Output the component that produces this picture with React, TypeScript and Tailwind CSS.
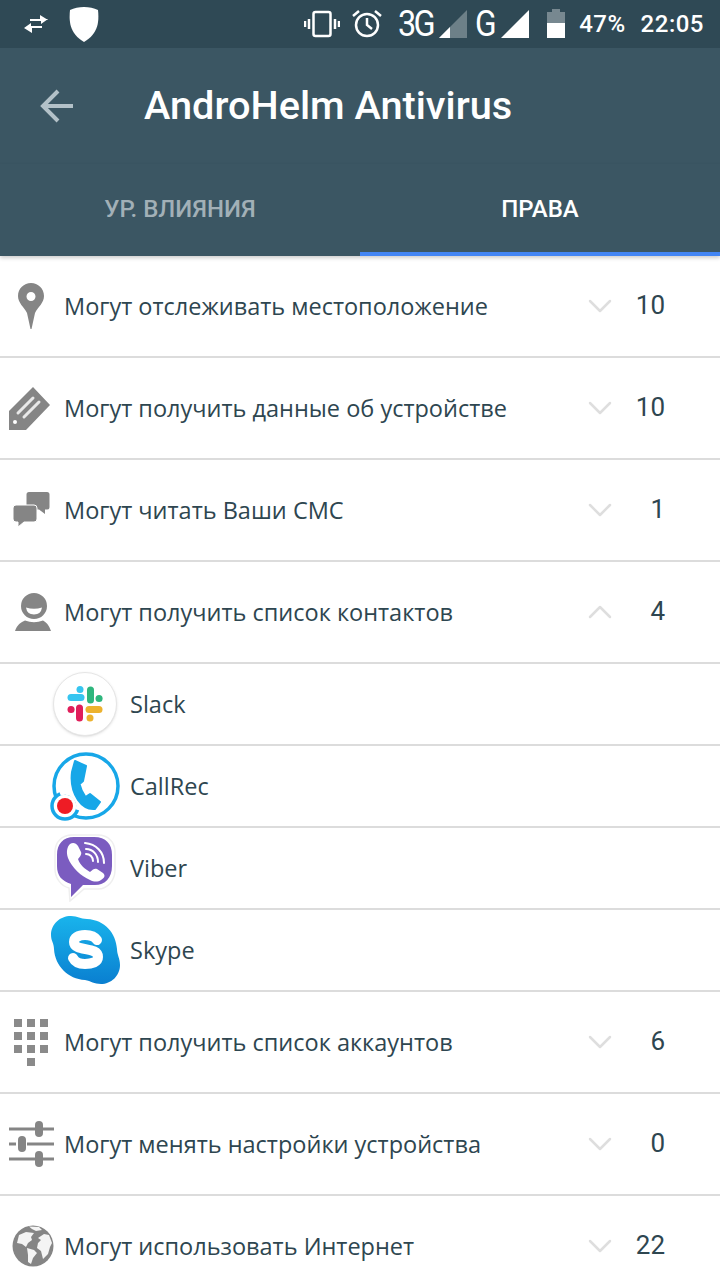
import React from 'react';
import { ChevronDown, ChevronUp } from 'lucide-react';

const PinIcon = () => (
  <svg width="26" height="46" viewBox="0 0 26 46">
    <path fillRule="evenodd" fill="#858585" d="M13 0C6 0 0 5.500 0 13C0 20 6 24 9 30L12.500 46H13.500L17 30C20 24 26 20 26 13C26 5.500 20 0 13 0ZM13 9A4.500 4.500 0 1 1 13 18A4.500 4.500 0 0 1 13 9Z" />
  </svg>
);

const TagIcon = () => (
  <svg width="42" height="43" viewBox="0 0 42 43">
    <path fillRule="evenodd" fill="#858585" d="M24 0L41 18L17 43H0V24ZM6 33A2 2 0 1 0 6 37A2 2 0 0 0 6 33Z" />
    <path d="M9 26L24 11M15 30L30 15" stroke="#e8e8e8" strokeWidth="3" strokeLinecap="round" />
  </svg>
);

const ChatIcon = () => (
  <svg width="37" height="36" viewBox="0 0 37 36">
    <path fill="#858585" d="M16 0H34Q36.500 0 36.500 2.500V15Q36.500 17.500 34 17.500H32L32 22L26 17.500H16Q13.500 17.500 13.500 15V2.500Q13.500 0 16 0Z" />
    <path fill="#858585" stroke="#fff" strokeWidth="1" d="M3 13H21Q24 13 24 16V27Q24 30 21 30H11L5 35V30H3Q0 30 0 27V16Q0 13 3 13Z" />
  </svg>
);

const UserIcon = () => (
  <svg width="36" height="38" viewBox="0 0 36 38">
    <path fillRule="evenodd" fill="#858585" d="M19 0A13 13 0 1 1 19 26A13 13 0 1 1 19 0ZM11 14.500Q19 17 27 14.500Q26 21.500 19 21.500Q12 21.500 11 14.500Z" />
    <path fill="#858585" d="M0 38C2 32 6 29 10 27.500Q19 31 28 27.500C31 29 34 32 36 38Z" />
  </svg>
);

const KeypadIcon = () => (
  <div className="grid grid-cols-3 gap-[5px]">
    {[0, 1, 2, 3, 4, 5, 6, 7, 8].map((i) => (
      <div key={i} className="w-[8px] h-[8px] bg-[#8a8a8a]" />
    ))}
    <div className="col-start-2 w-[8px] h-[8px] bg-[#8a8a8a]" />
  </div>
);

const SlidersIcon = () => (
  <svg width="46" height="46" viewBox="0 0 46 46">
    <g stroke="#858585" strokeWidth="3">
      <path d="M0 8H26M34 8H45M0 23H7M18 23H45M0 38H26M34 38H45" />
    </g>
    <rect x="26" y="0" width="8" height="16" rx="4" fill="#858585" />
    <rect x="9" y="15" width="8" height="16" rx="4" fill="#858585" />
    <rect x="26" y="30" width="8" height="16" rx="4" fill="#858585" />
  </svg>
);

const GlobeIcon = () => (
  <svg width="42" height="42" viewBox="0 0 42 42">
    <circle cx="21" cy="21" r="20.500" fill="#858585" />
    <path fill="#f4f4f4" d="M7 10L14 7L22 8L19 12L20 15L16 18L14 22L10 19L5 18ZM17 1.500L27 2L30 5L24 6L20 4ZM15 23L22 25L25 28L21 33L19 39L16 37L16 30ZM26 13L32 9L37 10L40 18L38 22L36 29L31 34L29 26L25 23L26 18L29 15Z" />
  </svg>
);

const SlackIcon = () => (
  <div className="w-[64px] h-[64px] rounded-full bg-white border border-[#e6e6e6] shadow-sm flex items-center justify-center">
    <svg width="36" height="36" viewBox="0 0 36 36">
      <g strokeWidth="7" strokeLinecap="round" fill="none">
        <path d="M4 11.500H14" stroke="#36c5f0" />
        <path d="M13 3.500V3.600" stroke="#36c5f0" />
        <path d="M23.500 4V14" stroke="#2eb67d" />
        <path d="M32 12.500H32.100" stroke="#2eb67d" />
        <path d="M22 23.500H32" stroke="#ecb22e" />
        <path d="M23 32V32.100" stroke="#ecb22e" />
        <path d="M12.500 22V32" stroke="#e01e5a" />
        <path d="M4 23.500H4.100" stroke="#e01e5a" />
      </g>
    </svg>
  </div>
);

const CallRecIcon = () => (
  <svg width="72" height="72" viewBox="0 0 72 72">
    <circle cx="37" cy="36" r="32" fill="#fff" stroke="#17a7e8" strokeWidth="3.500" />
    <circle cx="16" cy="56" r="13" fill="#fff" stroke="#17a7e8" strokeWidth="3.500" />
    <path d="M11 43.500A13.500 13.500 0 0 1 29 60" fill="none" stroke="#fff" strokeWidth="5" />
    <path fill="#17a7e8" stroke="#17a7e8" strokeWidth="2" strokeLinejoin="round" d="M26 11L37 16L34 31Q32 33 30.500 34Q32 41 36.500 47L41 44L51 52L46 59Q36 60 29 50Q21 38 23 22Z" />
    <circle cx="16" cy="56" r="8" fill="#ee1c25" />
  </svg>
);

const ViberIcon = () => (
  <svg width="62" height="68" viewBox="0 0 62 68">
    <path fill="#fff" stroke="#efefef" strokeWidth="1.500" d="M18 1H44C54 1 61 8 61 18V36C61 46 54 55 44 55H30L16 67L15 54C7 52 1 44 1 35V18C1 8 8 1 18 1Z" />
    <path fill="#7b5cc0" d="M20 3H40C52 3 58 10 58 21V32C58 44 51 51 41 51H29L17 63L17 50C8 47 3 42 3 32V21C3 10 9 3 20 3Z" />
    <path fill="#fff" d="M16 10C19 8 22 9 24 12L27 18C28 20 26 23 24 25C26 31 31 35 36 38C39 35 41 34 43 35L49 39C52 42 50 44 47 46C44 48 40 48 36 46C27 42 18 34 14 24C12 18 13 13 16 10Z" />
    <g fill="none" stroke="#fff" strokeWidth="2" strokeLinecap="round">
      <path d="M31 9C42 10 50 18 50 29" />
      <path d="M32 15C39 15 44 21 44 28" />
      <path d="M32 20C36 20 39 23 39 27" />
    </g>
  </svg>
);

const SkypeIcon = () => (
  <svg width="70" height="70" viewBox="0 0 70 70">
    <defs>
      <linearGradient id="skype" x1="0" y1="0" x2="0" y2="1">
        <stop offset="0" stopColor="#19b4ec" />
        <stop offset="1" stopColor="#0a7fd0" />
      </linearGradient>
    </defs>
    <path fill="url(#skype)" d="M20 1C27 1 29 4 36 4C54 5 65 18 66 34C66 40 69 43 69 50C69 61 60 69 50 69C43 69 40 66 34 65C17 64 4 51 3 34C3 28 0 26 0 20C0 9 9 1 20 1Z" />
    <path fill="none" stroke="#fff" strokeWidth="10" strokeLinecap="round" d="M46 25C44 22 40 20 34 20C27 20 23 23 23 27C23 37 47 31 47 42C47 47 41 49 34 49C28 49 24 47 22 43" />
  </svg>
);

type Item = { icon: React.ReactNode; iconClass: string; label: string; count: number; open?: boolean };
type InstalledApp = { icon: React.ReactNode; iconClass: string; name: string };

const before: Item[] = [
  { icon: <PinIcon />, iconClass: 'pl-[18px]', label: 'Могут отслеживать местоположение', count: 10 },
  { icon: <TagIcon />, iconClass: 'pl-[9px]', label: 'Могут получить данные об устройстве', count: 10 },
  { icon: <ChatIcon />, iconClass: 'pl-[13px]', label: 'Могут читать Ваши СМС', count: 1 },
  { icon: <UserIcon />, iconClass: 'pl-[15px]', label: 'Могут получить список контактов', count: 4, open: true },
];

const after: Item[] = [
  { icon: <KeypadIcon />, iconClass: 'pl-[14px]', label: 'Могут получить список аккаунтов', count: 6 },
  { icon: <SlidersIcon />, iconClass: 'pl-[9px]', label: 'Могут менять настройки устройства', count: 0 },
  { icon: <GlobeIcon />, iconClass: 'pl-[12px]', label: 'Могут использовать Интернет', count: 22 },
];

const apps: InstalledApp[] = [
  { icon: <SlackIcon />, iconClass: 'pl-[53px]', name: 'Slack' },
  { icon: <CallRecIcon />, iconClass: 'pl-[49px]', name: 'CallRec' },
  { icon: <ViberIcon />, iconClass: 'pl-[54px]', name: 'Viber' },
  { icon: <SkypeIcon />, iconClass: 'pl-[51px]', name: 'Skype' },
];

const Row = ({ item }: { item: Item }) => (
  <div className="h-[102px] shrink-0 border-b-2 border-[#dcdcdc] flex items-center text-[#2e4650]">
    <div className={`${item.iconClass} w-[64px] shrink-0 flex overflow-visible`}>{item.icon}</div>
    <span className="flex-1 pt-[2px] text-[23.500px] leading-none font-['Open_Sans',sans-serif]">{item.label}</span>
    <div className="flex items-center">
      {item.open ? (
        <ChevronUp size={40} strokeWidth={1.500} className="text-[#dedede]" />
      ) : (
        <ChevronDown size={40} strokeWidth={1.500} className="text-[#dedede]" />
      )}
      <span className="w-[45px] text-right text-[26px] leading-none -translate-y-[1px]">{item.count}</span>
      <div className="w-[55px]" />
    </div>
  </div>
);

const AppRow = ({ app }: { app: InstalledApp }) => (
  <div className="h-[82px] shrink-0 border-b-2 border-[#dcdcdc] flex items-center text-[#2e4650]">
    <div className={`${app.iconClass} w-[130px] shrink-0 flex`}>{app.icon}</div>
    <span className="pt-[2px] text-[23.500px] leading-none font-['Open_Sans',sans-serif]">{app.name}</span>
  </div>
);

export default function AppScreen() {
  return (
    <div className="w-[720px] h-[1280px] overflow-hidden bg-white flex flex-col font-['Roboto',sans-serif]">
      {/* status bar */}
      <div className="h-[48px] shrink-0 bg-[#2f4955] flex items-center text-white">
        <svg className="ml-[23px]" width="26" height="20" viewBox="0 0 26 20" fill="#fff">
          <path d="M1 15H19V13H8V10ZM25 6H7V8H18V11Z" transform="translate(0 -1)" />
          <path d="M17 1L25 6H17ZM9 19L1 14H9Z" />
        </svg>
        <svg className="ml-[20px]" width="30" height="35" viewBox="0 0 30 35" fill="#fff">
          <path d="M15 0C20 0 25 1 29 3C30 14 30 26 15 35C0 26 0 14 1 3C5 1 10 0 15 0Z" />
        </svg>
        <div className="ml-auto flex items-center">
          <svg width="36" height="28" viewBox="0 0 36 28" fill="none" stroke="#fff">
            <rect x="9.500" y="2" width="17" height="24" rx="2" strokeWidth="2.500" />
            <path d="M5 9V19M1 11V17M31 9V19M35 11V17" strokeWidth="2.500" />
          </svg>
          <svg className="ml-[11px]" width="32" height="32" viewBox="0 0 32 32" fill="none" stroke="#fff" strokeWidth="2.500">
            <circle cx="16" cy="17" r="11" />
            <path d="M16 10V17L21 21M2 8L8 3M30 8L24 3" />
          </svg>
          <span className="ml-[15px] w-[37px] text-[36px] leading-none tracking-[-3px] scale-x-[0.9] origin-left">3G</span>
          <svg className="ml-[4px]" width="28" height="28" viewBox="0 0 28 28">
            <path d="M28 0V28H0Z" fill="#fff" fillOpacity="0.3" />
            <path d="M11 17V28H0Z" fill="#fff" />
          </svg>
          <span className="ml-[8px] w-[22px] text-[36px] leading-none scale-x-[0.88] origin-left">G</span>
          <svg className="ml-[4px]" width="28" height="28" viewBox="0 0 28 28" fill="#fff">
            <path d="M28 0V28H0Z" />
          </svg>
          <svg className="ml-[17px]" width="20" height="30" viewBox="0 0 20 30">
            <path d="M6 0H14V3H19V14H1V3H6Z" fill="#fff" fillOpacity="0.35" />
            <path d="M1 14H19V29H1Z" fill="#fff" />
          </svg>
          <span className="ml-[13px] text-[24px] leading-none font-medium tracking-[0.5px]">47%</span>
          <span className="ml-[15px] mr-[16px] text-[24px] leading-none font-medium tracking-[0.5px]">22:05</span>
        </div>
      </div>

      {/* app bar */}
      <div className="h-[116px] shrink-0 bg-[#3b5663] flex items-center">
        <svg className="ml-[40px]" width="33" height="34" viewBox="0 0 33 34" fill="none" stroke="#b3c1c8" strokeWidth="4">
          <path d="M33 17H4M18 2L3 17L18 32" />
        </svg>
        <span className="ml-[71px] text-white text-[39.700px] leading-none font-medium">AndroHelm Antivirus</span>
      </div>

      {/* tabs */}
      <div className="relative z-10 h-[92px] shrink-0 bg-[#3b5663] flex shadow-[0_2px_4px_rgba(0,0,0,0.2)]">
        <div className="w-[360px] flex items-start justify-center pt-[33px] text-[24px] leading-none font-medium text-[#a2b0b7]">
          УР. ВЛИЯНИЯ
        </div>
        <div className="w-[360px] border-b-4 border-[#4285f4] flex items-start justify-center pt-[33px] text-[24px] leading-none font-medium text-white">
          ПРАВА
        </div>
      </div>

      <div className="flex flex-col">
        {before.map((item) => (
          <Row key={item.label} item={item} />
        ))}
        {apps.map((app) => (
          <AppRow key={app.name} app={app} />
        ))}
        {after.map((item) => (
          <Row key={item.label} item={item} />
        ))}
      </div>
    </div>
  );
}
